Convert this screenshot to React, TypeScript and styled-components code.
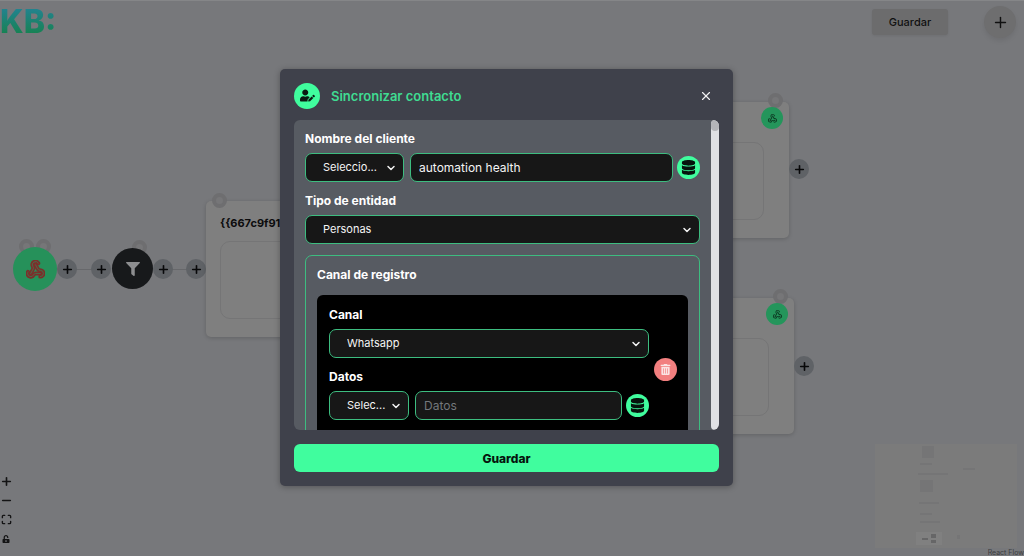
import React from "react";
import styled, { createGlobalStyle, css } from "styled-components";
import { FaDatabase, FaFilter, FaUserEdit, FaTrashAlt, FaUnlockAlt } from "react-icons/fa";
import { MdWebhook } from "react-icons/md";
import { ChevronDown, Maximize, Minus, Plus, Webhook, X } from "lucide-react";

const GlobalStyle = createGlobalStyle`
  *, *::before, *::after { box-sizing: border-box; }
  body { margin: 0; background: #77787b; font-family: Inter, "Open Sans", sans-serif; overflow: hidden; }
  button, input, select { font-family: inherit; margin: 0; }
`;

const green = "#40fd9e";
const line = "#3dbd80";

const Page = styled.div`
  position: relative;
  display: flex;
  flex-direction: column;
  min-height: 100vh;
  overflow: hidden;
  box-shadow: inset 0 1px 0 #858688;
`;

const TopBar = styled.header`
  display: flex;
  align-items: center;
  justify-content: space-between;
  height: 44px;
  padding-right: 8px;
`;

const Logo = styled.span`
  font-size: 32px;
  line-height: 44px;
  font-weight: 800;
  color: transparent;
  background: linear-gradient(180deg, #22838f 20%, #16824f 80%);
  background-clip: text;
  -webkit-background-clip: text;
`;

const TopActions = styled.div`
  display: flex;
  align-items: center;
  gap: 36px;
`;

const SaveFlow = styled.button`
  width: 76px;
  height: 26px;
  border: 0;
  border-radius: 3px;
  background: #6c6c6d;
  box-shadow: 0 1px 3px rgba(0, 0, 0, 0.08);
  color: #111;
  font-size: 11px;
  font-weight: 500;
`;

const AddNode = styled.button`
  display: grid;
  place-items: center;
  width: 32px;
  height: 32px;
  padding: 0;
  border: 0;
  border-radius: 50%;
  background: #6e6e6f;
  box-shadow: 0 3px 5px rgba(0, 0, 0, 0.08);
  color: #111;
`;

const Canvas = styled.main`
  flex: 1;
`;

const at = css<{ $x: number; $y: number }>`
  position: absolute;
  left: ${(p) => p.$x}px;
  top: ${(p) => p.$y}px;
`;

const Edge = styled.div<{ $x: number; $y: number }>`
  ${at}
  width: 34px;
  height: 1px;
  background: #67686b;
`;

const Disc = styled.div<{ $x: number; $y: number; $size: number; $bg: string; $fg?: string }>`
  ${at}
  display: grid;
  place-items: center;
  width: ${(p) => p.$size}px;
  height: ${(p) => p.$size}px;
  border-radius: 50%;
  background: ${(p) => p.$bg};
  color: ${(p) => p.$fg ?? "#111"};
`;

const WebhookMark = styled.span`
  display: grid;
  & > * { grid-area: 1 / 1; }
`;

const Handle = styled.button<{ $x: number; $y: number }>`
  ${at}
  display: grid;
  place-items: center;
  width: 20px;
  height: 20px;
  padding: 0;
  border: 0;
  border-radius: 50%;
  background: #5f6266;
  color: #08090a;
`;

const Bubble = styled.div<{ $x: number; $y: number }>`
  ${at}
  width: 15px;
  height: 15px;
  border: 4px solid #6e6e70;
  border-radius: 50%;
  background: #767678;
`;

const Card = styled.section<{ $x: number; $y: number }>`
  ${at}
  display: flex;
  flex-direction: column;
  width: 190px;
  height: 136px;
  padding: 14px 25px 18px 14px;
  border-radius: 5px;
  background: #7f7f7f;
  box-shadow: 0 1px 4px rgba(0, 0, 0, 0.18);
`;

const CardTitle = styled.h2`
  margin: 0 0 10px;
  height: 16px;
  font-size: 11px;
  line-height: 16px;
  font-weight: 700;
  color: #0c0c0d;
`;

const CardBody = styled.div`
  flex: 1;
  border: 1px solid #757576;
  border-radius: 10px;
`;

const Controls = styled.nav`
  position: absolute;
  left: 0;
  bottom: 8px;
  display: flex;
  flex-direction: column;
`;

const Control = styled.button`
  display: grid;
  place-items: center;
  width: 12px;
  height: 19px;
  padding: 0;
  border: 0;
  background: none;
  color: #141415;
`;

const MiniMap = styled.svg`
  position: absolute;
  right: 7px;
  bottom: 8px;
  width: 142px;
  height: 104px;
  background: #7b7b7b;
`;

const Attribution = styled.a`
  position: absolute;
  right: 0;
  bottom: 0;
  font-size: 7px;
  line-height: 7px;
  color: #3c3d3f;
  text-decoration: none;
`;

const Backdrop = styled.div`
  position: absolute;
  inset: 0;
  display: grid;
  place-items: center;
  padding: 0 11px 1px 0;
`;

const Modal = styled.section`
  display: flex;
  flex-direction: column;
  width: 100%;
  max-width: 453px;
  height: 75vh;
  padding: 0 14px 14px;
  border-radius: 5px;
  background: #3f414b;
  box-shadow: 0 1px 6px rgba(0, 0, 0, 0.3);
`;

const ModalHeader = styled.header`
  display: flex;
  align-items: center;
  gap: 11px;
  height: 51px;
  padding-top: 2px;
  flex: none;
`;

const ModalTitle = styled.h1`
  flex: 1;
  margin: 0;
  font-size: 13px;
  line-height: 20px;
  font-weight: 600;
  color: #3fdc92;
`;

const CloseButton = styled.button`
  display: grid;
  place-items: center;
  width: 26px;
  height: 26px;
  padding: 0;
  border: 0;
  background: none;
  color: #f1f1f3;
`;

const HeaderIcon = styled.span`
  display: grid;
  place-items: center;
  width: 26px;
  height: 26px;
  border-radius: 50%;
  background: ${green};
  color: #0a1a12;
`;

const Body = styled.div`
  display: flex;
  flex: 1;
  min-height: 0;
  border-radius: 6px;
  background: #575b62;
  overflow: hidden;
`;

const Scroll = styled.form`
  display: flex;
  flex-direction: column;
  gap: 11px;
  flex: 1;
  min-width: 0;
  padding: 11px;
  overflow-y: auto;
  scrollbar-width: none;
`;

const Track = styled.div`
  flex: none;
  width: 8px;
  border-radius: 4px;
  background: #dfe0e4;
`;

const Thumb = styled.div`
  height: 11px;
  border-radius: 4px;
  background: #b4b5b9;
`;

const Field = styled.div`
  display: flex;
  flex-direction: column;
  gap: 6px;
  flex: none;
`;

const Label = styled.label`
  font-size: 12px;
  line-height: 16px;
  font-weight: 700;
  color: #fff;
`;

const Row = styled.div`
  display: flex;
  align-items: center;
  gap: 4px;
`;

const SelectBox = styled.div<{ $width?: number }>`
  display: grid;
  align-items: center;
  flex: none;
  width: ${(p) => (p.$width ? `${p.$width}px` : "100%")};
  margin-right: ${(p) => (p.$width ? 2 : 0)}px;

  & > * { grid-area: 1 / 1; }
  & > svg { justify-self: end; margin-right: 7px; color: #f1f1f1; pointer-events: none; }
`;

const control = css`
  width: 100%;
  min-width: 0;
  height: 29px;
  border: 1px solid ${line};
  border-radius: 7px;
  background: #171717;
  color: #f4f4f4;
  outline: none;
`;

const Select = styled.select`
  ${control}
  appearance: none;
  padding: 0 17px 1px;
  font-size: 11px;
`;

const Input = styled.input`
  ${control}
  flex: 1;
  padding: 0 8px;
  font-size: 12px;
  &::placeholder { color: #74777c; opacity: 1; }
`;

const RoundButton = styled.button<{ $bg?: string; $fg?: string }>`
  display: grid;
  place-items: center;
  flex: none;
  width: 23px;
  height: 23px;
  padding: 0;
  border: 0;
  border-radius: 50%;
  background: ${(p) => p.$bg ?? green};
  color: ${(p) => p.$fg ?? "#06140d"};
`;

const Group = styled.div`
  display: flex;
  flex-direction: column;
  gap: 12px;
  flex: none;
  padding: 11px;
  border: 1px solid ${line};
  border-radius: 7px;
`;

const GroupTitle = styled.h2`
  margin: 0;
  font-size: 12px;
  line-height: 16px;
  font-weight: 700;
  color: #fff;
`;

const Entry = styled.div`
  display: flex;
  align-items: center;
  gap: 5px;
  padding: 12px 11px 12px 12px;
  border-radius: 6px;
  background: #000;
`;

const EntryFields = styled.div`
  display: flex;
  flex-direction: column;
  gap: 11px;
  flex: 1;
  min-width: 0;
  padding-bottom: 11px;
`;

const Submit = styled.button`
  flex: none;
  height: 28px;
  margin-top: 14px;
  padding: 0;
  border: 0;
  border-radius: 6px;
  background: ${green};
  color: #06140d;
  font-size: 12px;
  font-weight: 800;
`;

type DropProps = { id: string; text: string; width?: number; label?: string };

const Drop = ({ id, text, width, label }: DropProps) => (
  <SelectBox $width={width}>
    <Select id={id} aria-label={label}>
      <option>{text}</option>
    </Select>
    <ChevronDown size={12} strokeWidth={3} />
  </SelectBox>
);

const AddHandle = ({ x, y }: { x: number; y: number }) => (
  <Handle $x={x} $y={y} aria-label="+">
    <Plus size={13} strokeWidth={3} />
  </Handle>
);

const Flow = () => (
  <Canvas>
    <Edge $x={67} $y={269} />
    <Edge $x={163} $y={269} />
    <Bubble $x={19} $y={239} />
    <Bubble $x={36} $y={239} />
    <Bubble $x={132} $y={240} />
    <Disc $x={13} $y={247} $size={44} $bg="#26915a">
      <WebhookMark>
        <Webhook size={19} color="#7c2f2b" strokeWidth={5} />
        <Webhook size={19} color="#3d7a50" strokeWidth={1} />
      </WebhookMark>
    </Disc>
    <AddHandle x={57} y={259} />
    <AddHandle x={91} y={259} />
    <Disc $x={112} $y={248} $size={41} $bg="#17191b" $fg="#8d8e90">
      <FaFilter size={14} />
    </Disc>
    <AddHandle x={153} y={259} />
    <AddHandle x={186} y={259} />
    <Card $x={206} $y={201}>
      <CardTitle>{"{{667c9f91"}</CardTitle>
      <CardBody />
    </Card>
    <Bubble $x={212} $y={193} />
    <Card $x={599} $y={102}>
      <CardTitle />
      <CardBody />
    </Card>
    <Bubble $x={768} $y={93} />
    <Disc $x={761} $y={107} $size={22} $bg="#24955b" $fg="#0d3b24">
      <MdWebhook size={11} />
    </Disc>
    <AddHandle x={789} y={159} />
    <Card $x={604} $y={298}>
      <CardTitle />
      <CardBody />
    </Card>
    <Bubble $x={773} $y={289} />
    <Disc $x={766} $y={303} $size={22} $bg="#24955b" $fg="#0d3b24">
      <MdWebhook size={11} />
    </Disc>
    <AddHandle x={794} y={356} />
    <Controls>
      <Control aria-label="+"><Plus size={13} strokeWidth={3} /></Control>
      <Control aria-label="-"><Minus size={13} strokeWidth={3} /></Control>
      <Control aria-label="[ ]"><Maximize size={11} strokeWidth={3} /></Control>
      <Control aria-label="lock"><FaUnlockAlt size={8} /></Control>
    </Controls>
    <MiniMap viewBox="0 0 142 104">
      <g fill="#757576">
        <rect x="47" y="2" width="12" height="12" />
        <rect x="45" y="19" width="12" height="2" />
        <rect x="88" y="24" width="12" height="2" />
        <rect x="43" y="29" width="30" height="2" />
        <rect x="45" y="36" width="13" height="12" />
        <rect x="44" y="58" width="20" height="2" />
        <rect x="45" y="69" width="12" height="2" />
        <rect x="45" y="77" width="20" height="2" />
        <rect x="82" y="91" width="3" height="4" />
      </g>
      <rect x="41" y="88" width="26" height="13" fill="#808080" />
      <g fill="#666667">
        <rect x="47" y="94" width="6" height="2" />
        <rect x="56" y="90" width="5" height="4" />
        <rect x="56" y="96" width="5" height="3" />
      </g>
    </MiniMap>
    <Attribution href="#">React Flow</Attribution>
  </Canvas>
);

export default function App() {
  return (
    <>
      <GlobalStyle />
      <Page>
        <TopBar>
          <Logo>KB:</Logo>
          <TopActions>
            <SaveFlow>Guardar</SaveFlow>
            <AddNode aria-label="+"><Plus size={17} strokeWidth={2} /></AddNode>
          </TopActions>
        </TopBar>
        <Flow />
        <Backdrop>
          <Modal role="dialog" aria-labelledby="dialog-title">
            <ModalHeader>
              <HeaderIcon><FaUserEdit size={15} /></HeaderIcon>
              <ModalTitle id="dialog-title">Sincronizar contacto</ModalTitle>
              <CloseButton aria-label="×"><X size={14} /></CloseButton>
            </ModalHeader>
            <Body>
              <Scroll id="contact-form">
                <Field>
                  <Label htmlFor="client">Nombre del cliente</Label>
                  <Row>
                    <Drop id="client-source" text="Seleccio..." width={99} label="Nombre del cliente" />
                    <Input id="client" defaultValue="automation health" />
                    <RoundButton type="button" aria-label="Datos"><FaDatabase size={15} /></RoundButton>
                  </Row>
                </Field>
                <Field>
                  <Label htmlFor="entity">Tipo de entidad</Label>
                  <Drop id="entity" text="Personas" />
                </Field>
                <Group>
                  <GroupTitle>Canal de registro</GroupTitle>
                  <Entry>
                    <EntryFields>
                      <Field>
                        <Label htmlFor="channel">Canal</Label>
                        <Drop id="channel" text="Whatsapp" />
                      </Field>
                      <Field>
                        <Label htmlFor="data">Datos</Label>
                        <Row>
                          <Drop id="data-source" text="Selec..." width={80} label="Datos" />
                          <Input id="data" placeholder="Datos" />
                          <RoundButton type="button" aria-label="Datos"><FaDatabase size={15} /></RoundButton>
                        </Row>
                      </Field>
                    </EntryFields>
                    <RoundButton type="button" aria-label="×" $bg="#f27f7f" $fg="#fbe3e3">
                      <FaTrashAlt size={11} />
                    </RoundButton>
                  </Entry>
                </Group>
              </Scroll>
              <Track><Thumb /></Track>
            </Body>
            <Submit type="submit" form="contact-form">Guardar</Submit>
          </Modal>
        </Backdrop>
      </Page>
    </>
  );
}
